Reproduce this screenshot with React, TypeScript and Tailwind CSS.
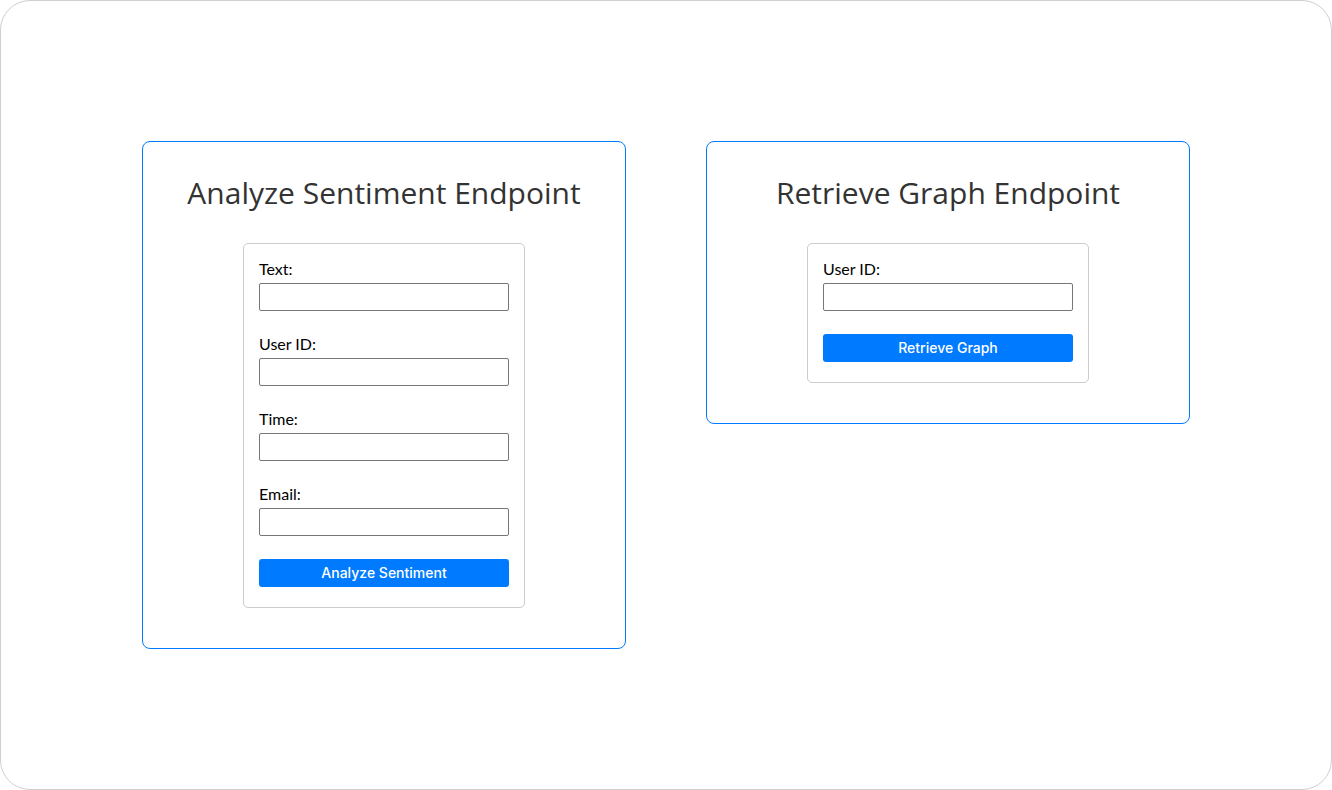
import React from "react";

function Field({ label }: { label: string }) {
  return (
    <div className="mb-[23px]">
      <label className="block text-[16px] leading-[20px] mb-[4px] text-black">
        {label}
      </label>
      <input
        type="text"
        className="block w-[250px] h-[28px] border border-[#767676] rounded-[2px] bg-white outline-none"
      />
    </div>
  );
}

function Card({
  title,
  fields,
  button,
}: {
  title: string;
  fields: string[];
  button: string;
}) {
  return (
    <div className="w-[484px] border border-[#007bff] rounded-[8px] bg-white flex flex-col items-center pt-[30px] pb-[40px]">
      <h2 className="font-['Open_Sans',sans-serif] text-[30px] leading-[41px] text-[#333] m-0">
        {title}
      </h2>
      <div className="mt-[30px] w-[282px] border border-[#ccc] rounded-[5px] pt-[15px] px-[15px] pb-[20px] font-['Lato',sans-serif]">
        {fields.map((f) => (
          <Field key={f} label={f} />
        ))}
        <button className="block w-[250px] h-[28px] bg-[#007bff] text-white rounded-[3px] text-[14px] leading-[16px] pb-[1px] font-['Inter',sans-serif] font-medium">
          {button}
        </button>
      </div>
    </div>
  );
}

export default function App() {
  return (
    <div className="w-[1332px] h-[790px] bg-white">
      <div className="w-full h-full border border-[#cfcfcf] rounded-[30px] flex items-center justify-center">
        <div className="flex items-start gap-[80px] h-[508px]">
          <Card
            title="Analyze Sentiment Endpoint"
            fields={["Text:", "User ID:", "Time:", "Email:"]}
            button="Analyze Sentiment"
          />
          <Card title="Retrieve Graph Endpoint" fields={["User ID:"]} button="Retrieve Graph" />
        </div>
      </div>
    </div>
  );
}
